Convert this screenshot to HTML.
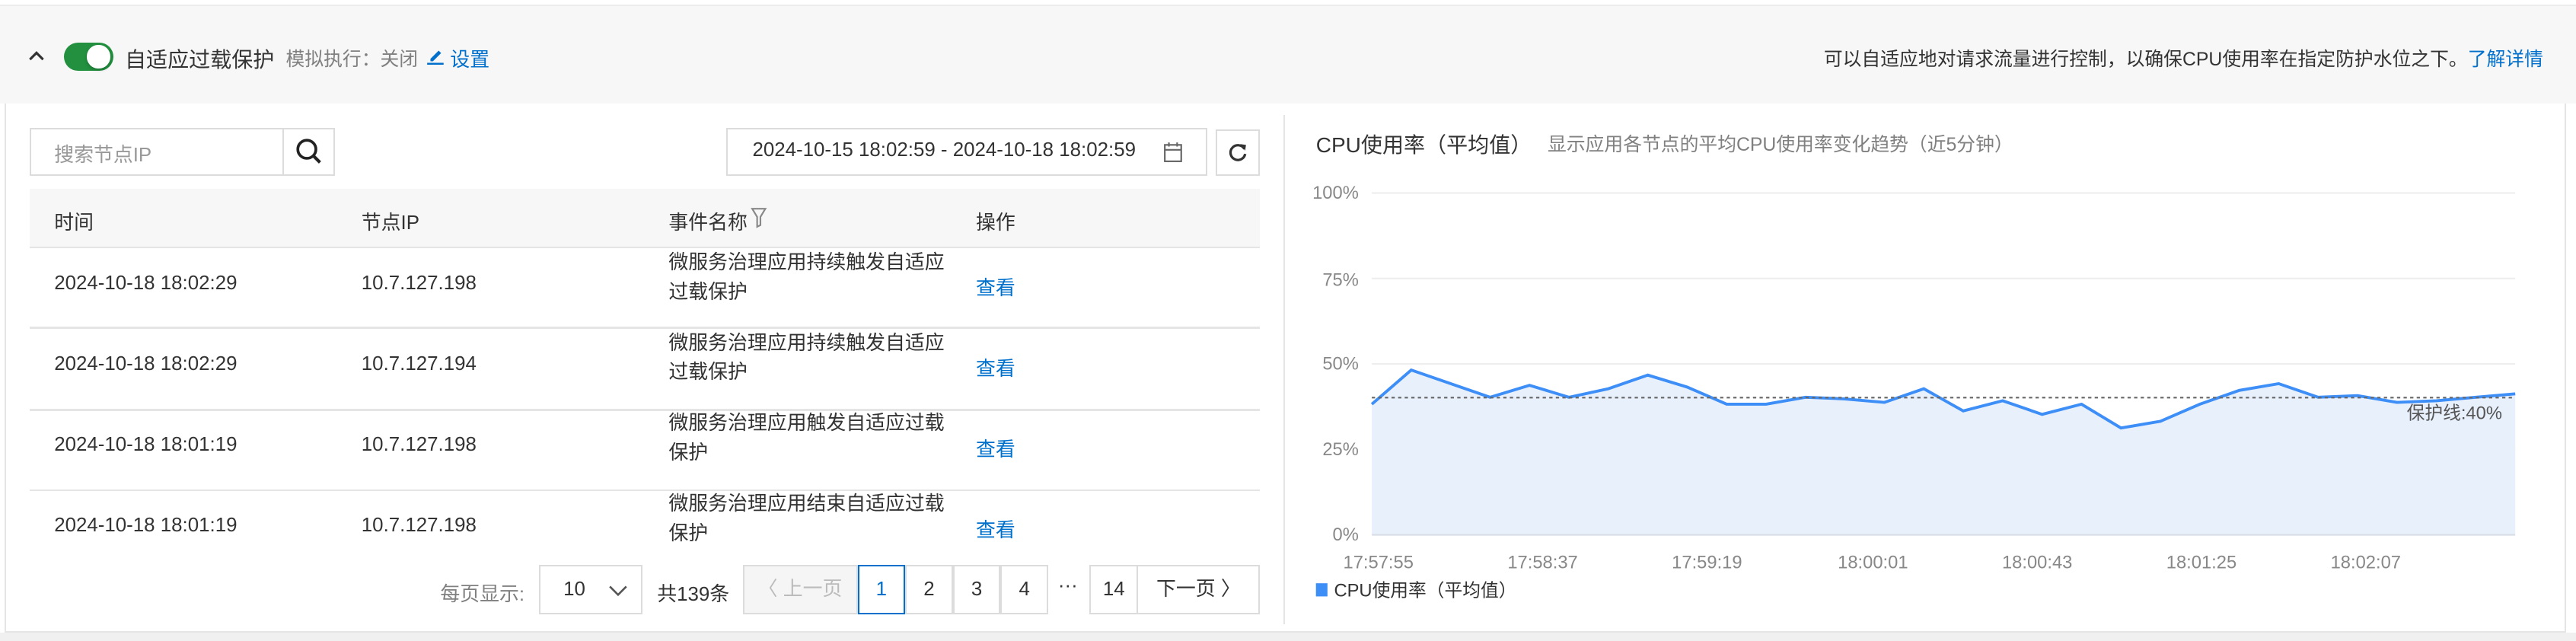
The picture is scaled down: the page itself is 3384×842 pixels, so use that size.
<!DOCTYPE html>
<html><head><meta charset="utf-8"><style>
*{box-sizing:border-box;margin:0;padding:0}
html,body{width:3384px;height:842px;overflow:hidden;background:#fff}
#w{zoom:2.1582;width:1568px;height:390px;position:relative;font-family:"Liberation Sans","Noto Sans CJK SC",sans-serif;color:#333;font-size:12px}
.a{position:absolute;white-space:nowrap}
.blue{color:#0070cc}
.gray{color:#808080}
.bx{position:absolute;border:1px solid #dcdcdc;background:#fff}
.pg{position:absolute;top:344px;height:30px;border:1px solid #dcdcdc;background:#fff;text-align:center;line-height:28px;font-size:12px}
</style></head><body><div id="w">
<div class="a" style="left:0;top:3px;width:1568px;height:60px;background:#f7f7f7;border-top:1px solid #ececec"></div>
<svg class="a" style="left:16px;top:29px" width="12" height="10"><path d="M2 7 L6 3 L10 7" fill="none" stroke="#333" stroke-width="1.5"/></svg>
<div class="a" style="left:39px;top:26px;width:30px;height:17px;border-radius:9px;background:#22903f"></div>
<div class="a" style="left:53px;top:27.5px;width:14px;height:14px;border-radius:7px;background:#fff;box-shadow:0 1px 2px rgba(0,0,0,.2)"></div>
<div class="a" style="left:76px;top:26px;font-size:13px;color:#333">自适应过载保护</div>
<div class="a gray" style="left:174px;top:27px;font-size:11.5px">模拟执行：关闭</div>
<svg class="a" style="left:259px;top:28px" width="12" height="12"><path d="M3 8 L8 3 L9.5 4.5 L4.5 9.5 L3 9.5Z" fill="#0070cc"/><path d="M1 11 H11" stroke="#0070cc" stroke-width="1.2"/></svg>
<div class="a blue" style="left:274px;top:27px">设置</div>
<div class="a" style="right:20px;top:27px;font-size:11.5px">可以自适应地对请求流量进行控制，以确保CPU使用率在指定防护水位之下。<span class="blue">了解详情</span></div>

<div class="a" style="left:3px;top:63px;width:1559px;height:322px;border:1px solid #e5e5e5;border-top:none;background:#fff"></div>
<div class="a" style="left:0;top:385px;width:1568px;height:5px;background:#f0f0f0"></div>
<div class="a" style="left:781px;top:70px;width:1px;height:310px;background:#e5e5e5"></div>

<div class="bx" style="left:18px;top:78px;width:155px;height:29px"></div>
<div class="a" style="left:33px;top:85px;color:#999">搜索节点IP</div>
<div class="bx" style="left:172px;top:78px;width:32px;height:29px"></div>
<svg class="a" style="left:180px;top:84px" width="17" height="17"><circle cx="7" cy="7" r="5.5" fill="none" stroke="#222" stroke-width="1.7"/><path d="M11 11 L15 15" stroke="#222" stroke-width="1.9"/></svg>
<div class="bx" style="left:442px;top:78px;width:293px;height:29px"></div>
<div class="a" style="left:458px;top:85px">2024-10-15 18:02:59 - 2024-10-18 18:02:59</div>
<svg class="a" style="left:708px;top:86px" width="12" height="13"><rect x="1" y="2" width="10" height="10" fill="none" stroke="#666"/><path d="M1 5 H11 M3.5 0.5V3 M8.5 0.5V3" stroke="#666"/></svg>
<div class="bx" style="left:740px;top:79px;width:27px;height:28px"></div>
<svg class="a" style="left:747px;top:86px" width="13" height="13"><path d="M10.5 4.5 A4.5 4.5 0 1 0 11 7.5" fill="none" stroke="#333" stroke-width="1.5"/><path d="M8 1.5 L11.5 2 L11 5.5Z" fill="#333"/></svg>

<div class="a" style="left:18px;top:115px;width:749px;height:36px;background:#f7f7f7;border-bottom:1px solid #e5e5e5"></div>
<div class="a" style="left:33px;top:126px">时间</div>
<div class="a" style="left:220px;top:126px">节点IP</div>
<div class="a" style="left:407px;top:126px">事件名称</div>
<svg class="a" style="left:457px;top:126px" width="10" height="13"><path d="M1 1 H9 L6 6 V11 L4 12 V6Z" fill="none" stroke="#888"/></svg>
<div class="a" style="left:594px;top:126px">操作</div>

<div class="a" style="left:18px;top:199px;width:749px;height:1px;background:#e5e5e5"></div>
<div class="a" style="left:18px;top:249px;width:749px;height:1px;background:#e5e5e5"></div>
<div class="a" style="left:18px;top:298px;width:749px;height:1px;background:#e5e5e5"></div>

<div class="a" style="left:33px;top:166px">2024-10-18 18:02:29</div><div class="a" style="left:220px;top:166px">10.7.127.198</div>
<div class="a" style="left:407px;top:151px;line-height:18px">微服务治理应用持续触发自适应<br>过载保护</div><div class="a blue" style="left:594px;top:166px">查看</div>
<div class="a" style="left:33px;top:215px">2024-10-18 18:02:29</div><div class="a" style="left:220px;top:215px">10.7.127.194</div>
<div class="a" style="left:407px;top:200px;line-height:18px">微服务治理应用持续触发自适应<br>过载保护</div><div class="a blue" style="left:594px;top:215px">查看</div>
<div class="a" style="left:33px;top:264px">2024-10-18 18:01:19</div><div class="a" style="left:220px;top:264px">10.7.127.198</div>
<div class="a" style="left:407px;top:249px;line-height:18px">微服务治理应用触发自适应过载<br>保护</div><div class="a blue" style="left:594px;top:264px">查看</div>
<div class="a" style="left:33px;top:313px">2024-10-18 18:01:19</div><div class="a" style="left:220px;top:313px">10.7.127.198</div>
<div class="a" style="left:407px;top:298px;line-height:18px">微服务治理应用结束自适应过载<br>保护</div><div class="a blue" style="left:594px;top:313px">查看</div>

<div class="a gray" style="left:268px;top:352px">每页显示:</div>
<div class="pg" style="left:328px;width:63px;text-align:left;padding-left:14px">10</div>
<svg class="a" style="left:370px;top:354px" width="12" height="10"><path d="M1 3 L6 8 L11 3" fill="none" stroke="#555" stroke-width="1.2"/></svg>
<div class="a" style="left:400px;top:352px">共139条</div>
<div class="pg" style="left:452px;width:70px;background:#f5f5f5;color:#bbb">〈 上一页</div>
<div class="pg" style="left:522px;width:29px;border-color:#0070cc;color:#0070cc">1</div>
<div class="pg" style="left:551px;width:29px">2</div>
<div class="pg" style="left:580px;width:29px">3</div>
<div class="pg" style="left:609px;width:29px">4</div>
<div class="a" style="left:644px;top:350px">···</div>
<div class="pg" style="left:663px;width:30px">14</div>
<div class="pg" style="left:692px;width:75px">下一页 〉</div>

<div class="a" style="left:801px;top:78px;font-size:13px;color:#333">CPU使用率（平均值）</div>
<div class="a gray" style="left:942px;top:79px;font-size:11.5px">显示应用各节点的平均CPU使用率变化趋势（近5分钟）</div>
<svg class="a" style="left:0;top:0" width="1568" height="390">
<g font-family="Liberation Sans" font-size="11" fill="#888" text-anchor="end">
<text x="827" y="121">100%</text><text x="827" y="174">75%</text><text x="827" y="225">50%</text><text x="827" y="277">25%</text><text x="827" y="329">0%</text>
</g>
<g stroke="#eee" stroke-width="1"><path d="M835 117.5H1531M835 169.5H1531M835 221.5H1531M835 273.5H1531"/></g>
<path d="M835 246 L859 225.2 L883 233.5 L907 241.8 L931 234.5 L955 241.8 L979 236.6 L1003 228.3 L1027 235.6 L1051 246 L1075 246 L1099 241.8 L1123 242.8 L1147 244.9 L1171 236.6 L1195 250.1 L1219 243.9 L1243 252.2 L1267 246 L1291 260.5 L1315 256.4 L1339 246 L1363 237.6 L1387 233.5 L1411 241.8 L1435 240.8 L1459 244.9 L1483 243.9 L1507 241.8 L1531 239.7 L1531 325 L835 325Z" fill="#e8f0fc"/>
<path d="M835 246 L859 225.2 L883 233.5 L907 241.8 L931 234.5 L955 241.8 L979 236.6 L1003 228.3 L1027 235.6 L1051 246 L1075 246 L1099 241.8 L1123 242.8 L1147 244.9 L1171 236.6 L1195 250.1 L1219 243.9 L1243 252.2 L1267 246 L1291 260.5 L1315 256.4 L1339 246 L1363 237.6 L1387 233.5 L1411 241.8 L1435 240.8 L1459 244.9 L1483 243.9 L1507 241.8 L1531 239.7" fill="none" stroke="#3d8ef7" stroke-width="1.8"/>
<path d="M835 325.5H1531" stroke="#d8dde6"/>
<path d="M835 242H1531" stroke="#666" stroke-dasharray="2 2"/>
<text x="1523" y="255" font-family="Liberation Sans,Noto Sans CJK SC" font-size="11" fill="#555" text-anchor="end">保护线:40%</text>
<g font-family="Liberation Sans" font-size="11" fill="#888" text-anchor="middle">
<text x="839" y="346">17:57:55</text><text x="939" y="346">17:58:37</text><text x="1039" y="346">17:59:19</text><text x="1140" y="346">18:00:01</text><text x="1240" y="346">18:00:43</text><text x="1340" y="346">18:01:25</text><text x="1440" y="346">18:02:07</text>
</g>
<rect x="801" y="355" width="7" height="8" fill="#3d8ef7"/>
<text x="812" y="363" font-family="Liberation Sans,Noto Sans CJK SC" font-size="11" fill="#333">CPU使用率（平均值）</text>
</svg>
</div></body></html>
